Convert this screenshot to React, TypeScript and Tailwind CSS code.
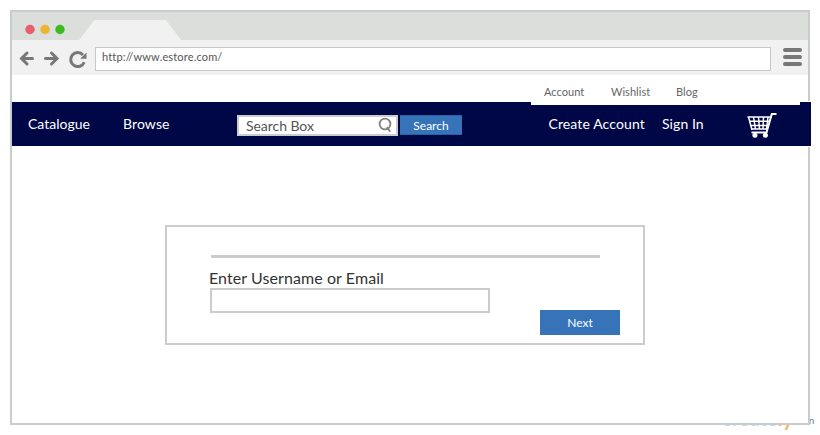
import React from "react";

function Toolbar() {
  return (
    <div className="flex h-[35px] bg-[#f1f1f1]">
      <svg className="h-[35px] w-[83px] shrink-0" viewBox="12 40 83 35" fill="none" stroke="#777" strokeWidth="3">
        <path d="M32.5 58.5H21.5M27 53L21.5 58.5L27 64" strokeLinecap="round" />
        <path d="M45.5 58.5H56.5M51.5 53L57 58.5L51.5 64" strokeLinecap="round" />
        <path d="M83 55A7 7 0 1 0 84.2 62.2" />
        <path d="M86.5 52.5V58.8H80.2Z" fill="#777" stroke="none" />
      </svg>
      <div className="mt-[7px] h-6 w-[676px] border border-[#c8c8c8] bg-white pl-1.5 text-[11px] leading-[18px] tracking-[0.16px] text-[#555]">
        http://www.estore.com/
      </div>
      <div className="ml-3 mt-2 flex w-[19px] flex-col gap-[3px]">
        <div className="h-1 rounded-full bg-[#777]" />
        <div className="h-1 rounded-full bg-[#777]" />
        <div className="h-1 rounded-full bg-[#777]" />
      </div>
    </div>
  );
}

function Cart() {
  return (
    <svg className="ml-[43px] mt-[10px] h-[27px] w-[30px]" viewBox="747 112 30 27" fill="none" stroke="white">
      <path d="M776.5 114H771.8L766.5 132.6H751.5" strokeWidth="2" />
      <path d="M747.5 117H770M749 121.3H769M750 125.5H768M751 129H767" strokeWidth="1.5" />
      <path d="M748.5 117L752 130M753.5 117L755.5 129M758.5 117L759.5 129M763.5 117L763 129M768 117L766.5 129" strokeWidth="1.5" />
      <g fill="white" stroke="none">
        <circle cx="754.9" cy="135.3" r="2.5" />
        <circle cx="765.4" cy="135.3" r="2.5" />
      </g>
    </svg>
  );
}

export default function App() {
  return (
    <div className="relative h-[435px] w-[820px] overflow-hidden bg-white p-2.5 font-['Lato',sans-serif]">
      <div className="absolute left-[722px] top-[406px] text-[20px] font-bold leading-6 text-[#b9daf0]">
        create<span className="text-[#f9b35f]">ly</span>
      </div>
      <div className="absolute left-[803px] top-[414px] text-[10px] leading-3 text-[#777]">on</div>

      <div className="relative h-[415px] w-[800px] border-2 border-[#cacccb] bg-white">
        <div className="flex h-7 bg-[#dcdedb]">
          <svg className="h-7 w-[180px]" viewBox="12 12 180 28">
            <circle cx="30" cy="29.5" r="4.7" fill="#e95d6c" />
            <circle cx="45" cy="29.5" r="4.7" fill="#ebb52d" />
            <circle cx="60" cy="29.5" r="4.7" fill="#3bbb1e" />
            <path d="M79 40L94.5 20H166L181 40Z" fill="#f1f1f1" />
          </svg>
        </div>
        <Toolbar />

        <div className="relative z-10 ml-[519px] mt-[3px] flex h-[27px] w-[269px] bg-white pl-[13px] text-[11px] leading-[27px] tracking-[0.05px] text-[#666]">
          <span className="w-[67px]">Account</span>
          <span className="w-[65px]">Wishlist</span>
          <span>Blog</span>
        </div>

        <div className="-mt-1 -mr-[3px] box-content flex h-11 w-[799px] border-y border-white bg-[#000746] text-[14px] leading-[44px] text-white">
          <span className="ml-4 w-[95px]">Catalogue</span>
          <span className="w-[114px] tracking-[0.1px]">Browse</span>
          <div className="mt-[13px] flex h-[21px] w-[161px] items-center justify-between border-2 border-[#ccc] bg-white pl-[7px] pr-[3px] text-[14px] leading-none tracking-[-0.05px] text-[#555]">
            Search Box
            <svg className="h-[17px] w-[15px]" viewBox="0 0 15 17" fill="none" stroke="#808080" strokeWidth="1.8">
              <circle cx="7" cy="7" r="5.4" />
              <path d="M8.8 10.2L12.3 14.8" />
            </svg>
          </div>
          <div className="ml-[2px] mt-[13px] h-5 w-[62px] border-y border-[#2864a5] bg-[#3673b8] text-center text-[12px] leading-[19px]">Search</div>
          <span className="ml-[86.5px] w-[113.5px] whitespace-nowrap tracking-[0.12px]">Create Account</span>
          <span className="w-[42px] whitespace-nowrap tracking-[0.08px]">Sign In</span>
          <Cart />
        </div>

        <div className="ml-[153px] mt-[78px] h-[120px] w-[480px] border-2 border-[#ccc] pl-[43px] pt-7">
          <div className="ml-[0.5px] h-[3px] w-[389.5px] bg-[#ccc]" />
          <div className="-ml-px mt-[10px] h-5 text-[16px] leading-5 tracking-[0.08px] text-[#333]">Enter Username or Email</div>
          <div className="flex">
            <div className="h-[25px] w-[280px] border-2 border-[#ccc]" />
            <div className="ml-[50px] mt-[22px] h-[25px] w-20 bg-[#3673b8] text-center text-[12px] leading-[25px] text-white">Next</div>
          </div>
        </div>
      </div>
    </div>
  );
}
